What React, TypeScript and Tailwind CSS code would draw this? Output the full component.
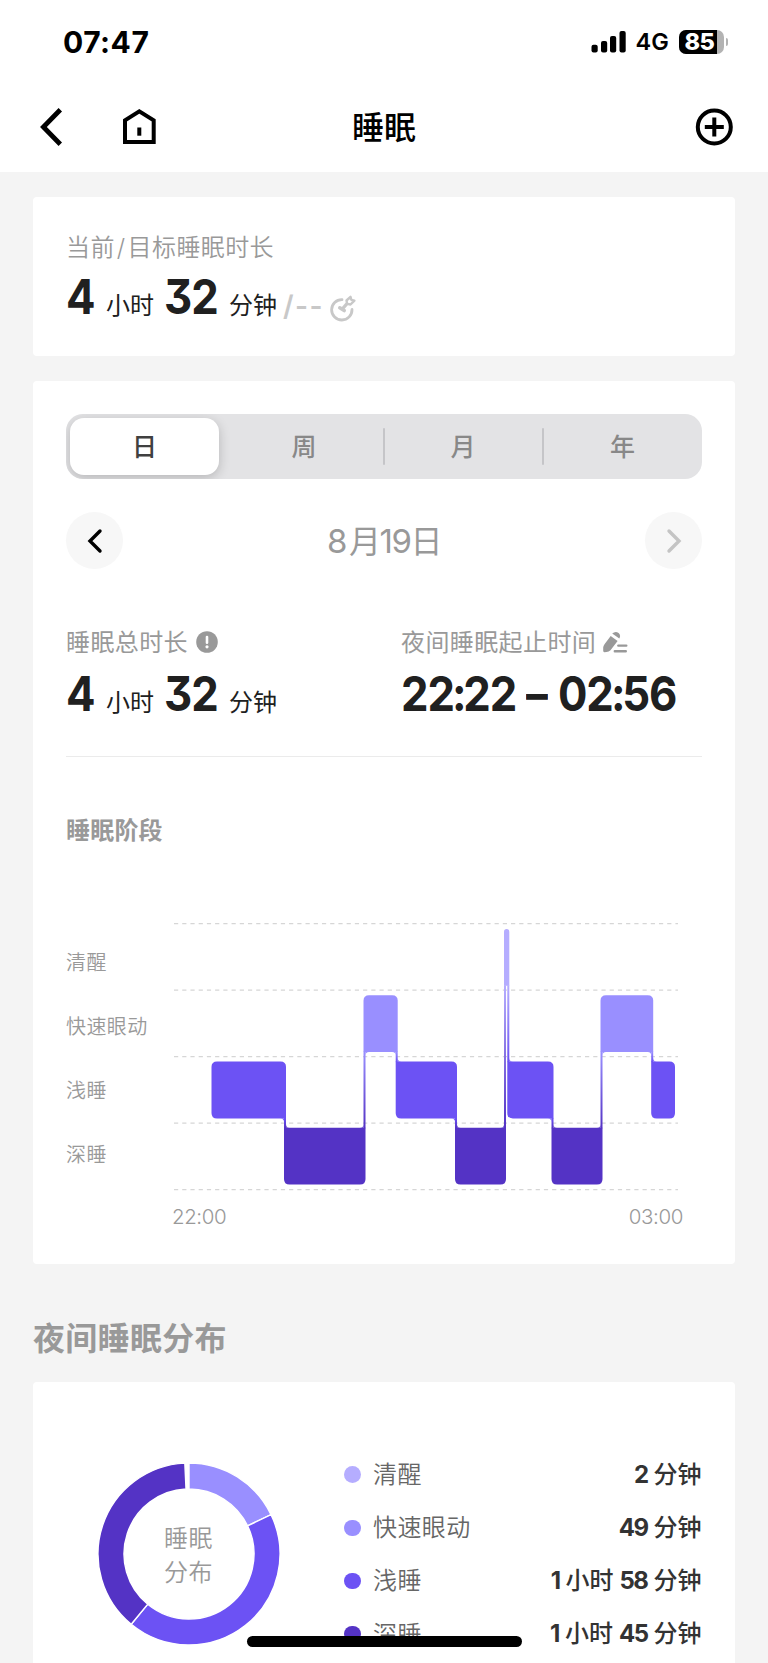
import { useState } from 'react';

type Stage = 'awake' | 'rem' | 'light' | 'deep';

const STAGES: Record<
  Stage,
  { label: string; color: string; dot: string; top: number }
> = {
  awake: { label: '清醒', color: '#b5adff', dot: 'bg-[#b5adff]', top: 6 },
  rem: { label: '快速眼动', color: '#998fff', dot: 'bg-[#998fff]', top: 72.2 },
  light: { label: '浅睡', color: '#6c52f4', dot: 'bg-[#6c52f4]', top: 138.6 },
  deep: { label: '深睡', color: '#5433c5', dot: 'bg-[#5433c5]', top: 204.8 },
};

const STAGE_ORDER: Stage[] = ['awake', 'rem', 'light', 'deep'];

const BLOCK_HEIGHT = 56.8;

const SEGMENTS: { stage: Stage; from: number; to: number }[] = [
  { stage: 'light', from: 37.5, to: 112 },
  { stage: 'deep', from: 110, to: 191.5 },
  { stage: 'rem', from: 189.5, to: 223.7 },
  { stage: 'light', from: 221.7, to: 283 },
  { stage: 'deep', from: 281, to: 332 },
  { stage: 'awake', from: 330, to: 335.3 },
  { stage: 'light', from: 333.3, to: 379.5 },
  { stage: 'deep', from: 377.5, to: 428.5 },
  { stage: 'rem', from: 426.5, to: 479.2 },
  { stage: 'light', from: 477.2, to: 501 },
];

const DISTRIBUTION: {
  stage: Stage;
  minutes: number;
  value: [string, string][];
}[] = [
  { stage: 'awake', minutes: 2, value: [['2', '分钟']] },
  { stage: 'rem', minutes: 49, value: [['49', '分钟']] },
  {
    stage: 'light',
    minutes: 118,
    value: [
      ['1', '小时'],
      ['58', '分钟'],
    ],
  },
  {
    stage: 'deep',
    minutes: 105,
    value: [
      ['1', '小时'],
      ['45', '分钟'],
    ],
  },
];

const TABS = ['日', '周', '月', '年'];

function StatusBar() {
  return (
    <div className="flex h-[84px] items-center justify-between pr-10 pl-[63px]">
      <span className="text-[30px] leading-[36px] font-bold tracking-[0.5px]">
        07:47
      </span>
      <div className="flex items-center">
        <svg width="36" height="22" viewBox="0 0 36 22">
          <rect x="0.5" y="13.8" width="6.2" height="7.8" rx="2" />
          <rect x="10" y="10" width="6.2" height="11.6" rx="2" />
          <rect x="19" y="5" width="6.2" height="16.6" rx="2" />
          <rect x="28.5" y="0" width="6.2" height="21.6" rx="2" />
        </svg>
        <span className="ml-[9px] w-[43px] text-[23.5px] leading-[30px] font-semibold">
          4G
        </span>
        <div className="flex h-6 w-[45px] items-center rounded-[7px] bg-[#b3b3b3]">
          <span className="h-6 w-[38px] rounded-l-[7px] bg-black pl-[6px] text-[23.5px] leading-6 font-extrabold tracking-tight text-white">
            85
          </span>
        </div>
        <span className="ml-[2px] h-[8px] w-[2.5px] rounded-r-full bg-[#b3b3b3]" />
      </div>
    </div>
  );
}

function NavBar() {
  return (
    <div className="flex h-[86px] items-center pr-[35px] pl-10">
      <button aria-label="返回">
        <svg width="24" height="38" viewBox="0 0 24 38" fill="none">
          <path d="M20.3 1.8 L3.4 19 L20.3 36.2" stroke="#000" strokeWidth="4.8" />
        </svg>
      </button>
      <button aria-label="首页" className="ml-[59px]">
        <svg width="33" height="36" viewBox="0 0 33 36" fill="none">
          <path
            d="M2 33 V11.3 L16.3 2.4 L30.7 11.3 V33 Z"
            stroke="#000"
            strokeWidth="4"
          />
          <rect x="14.3" y="18.5" width="4" height="8.2" fill="#000" />
        </svg>
      </button>
      <h1 className="w-[456px] pt-[2px] text-center text-[32px] leading-none font-medium">
        睡眠
      </h1>
      <button aria-label="添加" className="ml-auto">
        <svg width="38" height="38" viewBox="0 0 38 38" fill="none">
          <circle cx="19.3" cy="19" r="16.5" stroke="#000" strokeWidth="4" />
          <path
            d="M9.8 19 H28.8 M19.3 9.5 V28.5"
            stroke="#000"
            strokeWidth="4"
          />
        </svg>
      </button>
    </div>
  );
}

function BigNumber({ text, width }: { text: string; width: string }) {
  return (
    <span className={`${width} text-[48px] leading-none font-bold`}>
      <span className="inline-block origin-left scale-x-[0.91] tracking-[-1.2px] whitespace-nowrap [font-feature-settings:'cv09']">
        {text.split(':').map((part, i) => (
          <span key={i}>
            {i > 0 && <span className="-mr-[2.5px] -ml-[2px]">:</span>}
            {part}
          </span>
        ))}
      </span>
    </span>
  );
}

function Duration() {
  return (
    <div className="flex items-baseline text-[#202020]">
      <BigNumber text="4" width="w-[40px]" />
      <span className="w-[58px] text-2xl leading-none">小时</span>
      <BigNumber text="32" width="w-[65px]" />
      <span className="text-2xl leading-none">分钟</span>
    </div>
  );
}

function GoalCard() {
  return (
    <section className="mt-[25px] h-[159px] rounded bg-white px-[33px] pt-[37px]">
      <h2 className="text-2xl leading-[28px] font-[350] tracking-[0.4px] text-[#999]">
        当前<span className="mx-[2px]">/</span>目标睡眠时长
      </h2>
      <div className="flex">
        <div className="mt-[11px]">
          <Duration />
        </div>
        <span className="mt-[30px] ml-[6px] text-[28px] leading-none font-semibold tracking-[1.4px] text-[#c8c8c8]">
          /--
        </span>
        <svg
          className="mt-[33px] ml-[5px]"
          width="27"
          height="27"
          viewBox="0 0 27 27"
          fill="none"
          stroke="#c8c8c8"
        >
          <path
            d="M13 4.6 A10.2 10.2 0 1 0 23 14.5"
            strokeWidth="2.8"
            strokeLinecap="round"
          />
          <path d="M13 14.4 L18 8.6" strokeWidth="3.2" />
          <path
            d="M10.8 12.8 L15.2 15.6"
            strokeWidth="3.6"
            strokeLinecap="round"
          />
          <path
            d="M17.5 5.5 L21.5 1.8 L22.3 4.8 L25.4 5.7 L21.5 9.5 L18.2 8.8 Z"
            strokeWidth="2.4"
            strokeLinejoin="round"
          />
        </svg>
      </div>
    </section>
  );
}

function PeriodTabs() {
  const [active, setActive] = useState(0);

  return (
    <div className="flex h-[65px] items-center overflow-hidden rounded-[17px] bg-[#e3e3e5]">
      {TABS.map((tab, i) => (
        <div key={tab} className="flex w-1/4 items-center">
          <button
            onClick={() => setActive(i)}
            className={`h-[57px] flex-1 rounded-[14px] pt-[2px] text-[25px] leading-none font-medium ${
              i === active
                ? 'mr-[6px] ml-1 bg-white text-[#404040] shadow-[0_3px_12px_rgba(0,0,0,0.2)]'
                : 'text-[#888]'
            }`}
          >
            {tab}
          </button>
          {i > active && i < TABS.length - 1 && (
            <span className="-mr-px h-[37px] w-[2px] rounded-full bg-[#c5c5c8]" />
          )}
        </div>
      ))}
    </div>
  );
}

function DatePicker() {
  return (
    <div className="mt-[33px] flex h-[57px] items-center justify-between">
      <button
        aria-label="前一天"
        className="flex size-[57px] items-center justify-center rounded-full bg-[#f7f7f7]"
      >
        <svg width="16" height="26" viewBox="0 0 16 26" fill="none">
          <path
            d="M13 3 L3 13 L13 23"
            stroke="#000"
            strokeWidth="3.4"
            strokeLinecap="round"
          />
        </svg>
      </button>
      <span className="flex items-baseline pt-[2px] text-[33px] leading-none tracking-[-1.5px] text-[#999]">
        8<span className="ml-[3px] text-[32px]">月</span>19
        <span className="text-[32px]">日</span>
      </span>
      <button
        aria-label="后一天"
        className="flex size-[57px] items-center justify-center rounded-full bg-[#f7f7f7]"
      >
        <svg width="16" height="26" viewBox="0 0 16 26" fill="none">
          <path
            d="M3 3 L13 13 L3 23"
            stroke="#c4c4c4"
            strokeWidth="3.4"
            strokeLinecap="round"
          />
        </svg>
      </button>
    </div>
  );
}

function Summary() {
  return (
    <div className="mt-[60px] flex h-[128px] border-b border-[#ebebeb]">
      <div className="w-[335px]">
        <div className="flex h-7 items-center text-2xl leading-none tracking-[0.4px] text-[#999]">
          睡眠总时长
          <svg
            className="-mt-[2px] ml-[8px]"
            width="22"
            height="22"
            viewBox="0 0 22 22"
          >
            <circle cx="11" cy="11" r="10.8" fill="#999" />
            <path
              d="M11 6 V11.8"
              stroke="#fff"
              strokeWidth="2.6"
              strokeLinecap="round"
            />
            <circle cx="11" cy="15.8" r="1.6" fill="#fff" />
          </svg>
        </div>
        <div className="mt-[13px]">
          <Duration />
        </div>
      </div>
      <div>
        <div className="flex h-7 items-center text-2xl leading-none tracking-[0.4px] text-[#999]">
          夜间睡眠起止时间
          <svg
            className="-mt-[2px] ml-[6px]"
            width="26"
            height="24"
            viewBox="0 0 26 24"
            fill="#999"
          >
            <path d="M10.2 3.6 Q13.5 0.6 16.6 3.1 Q19.2 5.6 17.3 8.6 Z" />
            <path d="M8.7 6 L15.6 11 L8.5 20.3 Q6.8 22 4.5 22 L2.3 22.2 Q1.2 22 1.2 20.8 V17.6 Q1.3 15.8 2.5 14.2 Z" />
            <path
              d="M16.3 15.6 H24.3 M12.8 21.3 H23.8"
              stroke="#999"
              strokeWidth="2.4"
              strokeLinecap="round"
            />
          </svg>
        </div>
        <div className="mt-[13px] flex text-[#202020]">
          <BigNumber text="22:22" width="w-[125px]" />
          <BigNumber text="–" width="w-[32px]" />
          <BigNumber text="02:56" width="w-[120px]" />
        </div>
      </div>
    </div>
  );
}

function StageBlock({ index }: { index: number }) {
  const { stage, from, to } = SEGMENTS[index];
  const { color, top } = STAGES[stage];
  const bottom = top + BLOCK_HEIGHT;
  const prev = SEGMENTS[index - 1];
  const next = SEGMENTS[index + 1];
  const r = Math.min(5.5, (to - from) / 2);

  // corners touching a connector stay square
  const tl = prev && STAGES[prev.stage].top < top ? 0 : r;
  const bl = prev && STAGES[prev.stage].top > top ? 0 : r;
  const tr = next && STAGES[next.stage].top < top ? 0 : r;
  const br = next && STAGES[next.stage].top > top ? 0 : r;

  return (
    <path
      fill={color}
      d={`M${from + tl} ${top} H${to - tr} Q${to} ${top} ${to} ${top + tr} V${bottom - br} Q${to} ${bottom} ${to - br} ${bottom} H${from + bl} Q${from} ${bottom} ${from} ${bottom - bl} V${top + tl} Q${from} ${top} ${from + tl} ${top} Z`}
    />
  );
}

function Connector({ index }: { index: number }) {
  const a = SEGMENTS[index];
  const b = SEGMENTS[index + 1];
  const left = b.from;
  const right = a.to;
  const down = STAGES[b.stage].top > STAGES[a.stage].top;
  const dir = down ? 1 : -1;
  const ya = STAGES[a.stage].top + (down ? BLOCK_HEIGHT : 0);
  const yb = STAGES[b.stage].top + (down ? 0 : BLOCK_HEIGHT);
  const ra = a.stage === 'awake' ? 0.6 : 3.5;
  const rb = b.stage === 'awake' ? 0.6 : 3.5;
  const id = `connector-${index}`;

  return (
    <>
      <linearGradient
        id={id}
        gradientUnits="userSpaceOnUse"
        x1="0"
        x2="0"
        y1={ya}
        y2={yb}
      >
        <stop offset="0" stopColor={STAGES[a.stage].color} />
        <stop offset="1" stopColor={STAGES[b.stage].color} />
      </linearGradient>
      <rect
        x={left}
        y={Math.min(ya, yb) - 0.5}
        width={right - left}
        height={Math.abs(yb - ya) + 1}
        fill={`url(#${id})`}
      />
      <path
        fill={STAGES[a.stage].color}
        d={`M${left - ra} ${ya} Q${left} ${ya} ${left} ${ya + dir * ra} V${ya} Z`}
      />
      <path
        fill={STAGES[b.stage].color}
        d={`M${right} ${yb - dir * rb} Q${right} ${yb} ${right + rb} ${yb} H${right} Z`}
      />
    </>
  );
}

function StageChart() {
  return (
    <div className="mt-[80px] flex">
      <div className="flex w-[108px] flex-col pt-[8px]">
        {STAGE_ORDER.map((stage) => (
          <span
            key={stage}
            className="flex h-[64.1px] items-center text-[20px] leading-none font-[350] tracking-[0.4px] text-[#999]"
          >
            {STAGES[stage].label}
          </span>
        ))}
      </div>
      <div className="w-[509px]">
        <svg width="509" height="270" viewBox="0 0 509 270">
          {[0.6, 67.2, 133.6, 200.2, 266.6].map((y) => (
            <path
              key={y}
              d={`M0 ${y} H504`}
              stroke="#d6d6d6"
              strokeWidth="1.3"
              strokeDasharray="4.2 4.02"
            />
          ))}
          {SEGMENTS.map((_, i) => (
            <StageBlock key={i} index={i} />
          ))}
          {SEGMENTS.slice(1).map((_, i) => (
            <Connector key={i} index={i} />
          ))}
        </svg>
        <div className="mt-[14px] -ml-[2px] flex justify-between text-[20.5px] leading-none font-[350] tracking-[-0.4px] text-[#999]">
          <span>22:00</span>
          <span>03:00</span>
        </div>
      </div>
    </div>
  );
}

function Donut() {
  const total = DISTRIBUTION.reduce((sum, d) => sum + d.minutes, 0);
  const slices = DISTRIBUTION.filter((d) => d.stage !== 'awake');

  const point = (angle: number, r: number) =>
    `${91 + r * Math.sin(angle)} ${91 - r * Math.cos(angle)}`;

  let angle = 0;

  return (
    <div className="relative ml-[32px] size-[182px]">
      <svg width="182" height="182" viewBox="0 0 182 182">
        {slices.map((slice) => {
          const start = angle;
          const end = start + (slice.minutes / total) * Math.PI * 2;
          const large = end - start > Math.PI ? 1 : 0;
          angle = end;
          return (
            <path
              key={slice.stage}
              d={`M${point(start, 91)} A91 91 0 ${large} 1 ${point(end, 91)} L${point(end, 65)} A65 65 0 ${large} 0 ${point(start, 65)} Z`}
              fill={STAGES[slice.stage].color}
              stroke="#fff"
              strokeWidth="1.4"
            />
          );
        })}
      </svg>
      <div className="absolute inset-0 flex flex-col items-center justify-center pt-[3px] text-2xl leading-[34px] font-[350] tracking-[0.4px] text-[#999]">
        <span>睡眠</span>
        <span>分布</span>
      </div>
    </div>
  );
}

function DistributionCard() {
  return (
    <section className="flex h-[400px] rounded bg-white pt-[66px] pr-[33.5px] pl-[32.5px]">
      <div className="w-[278.5px] pt-[15px]">
        <Donut />
      </div>
      <ul className="flex-1">
        {DISTRIBUTION.map(({ stage, value }) => (
          <li key={stage} className="flex h-[53.2px] items-center">
            <span
              className={`size-[16.5px] rounded-full ${STAGES[stage].dot}`}
            />
            <span className="ml-[12.5px] pt-px text-2xl leading-none font-[350] tracking-[0.4px] text-[#666]">
              {STAGES[stage].label}
            </span>
            <span className="ml-auto flex items-baseline gap-[6px] text-2xl leading-none font-medium text-[#333]">
              {value.map(([amount, unit]) => (
                <span key={unit} className="flex items-baseline gap-[6px]">
                  <span className="font-bold tracking-[-1.5px]">{amount}</span>
                  {unit}
                </span>
              ))}
            </span>
          </li>
        ))}
      </ul>
    </section>
  );
}

export default function App() {
  return (
    <div className="relative h-[1663px] w-[768px] overflow-hidden bg-[#f4f4f4] font-['Inter','Noto_Sans_CJK_SC',sans-serif] text-black">
      <header className="h-[172px] bg-white">
        <StatusBar />
        <NavBar />
      </header>

      <main className="px-[33px]">
        <GoalCard />

        <section className="mt-[25px] h-[882.5px] rounded bg-white px-[33px] pt-[33px]">
          <PeriodTabs />
          <DatePicker />
          <Summary />
          <h2 className="mt-[61px] text-2xl leading-[25px] font-bold tracking-[0.2px] text-[#999]">
            睡眠阶段
          </h2>
          <StageChart />
        </section>

        <h2 className="flex h-[118.5px] items-center pt-[33px] text-[32px] leading-none font-bold tracking-[0.3px] text-[#999]">
          夜间睡眠分布
        </h2>
        <DistributionCard />
      </main>

      <div className="absolute bottom-[16.5px] left-[247px] h-[10.5px] w-[274.5px] rounded-full bg-black" />
    </div>
  );
}
